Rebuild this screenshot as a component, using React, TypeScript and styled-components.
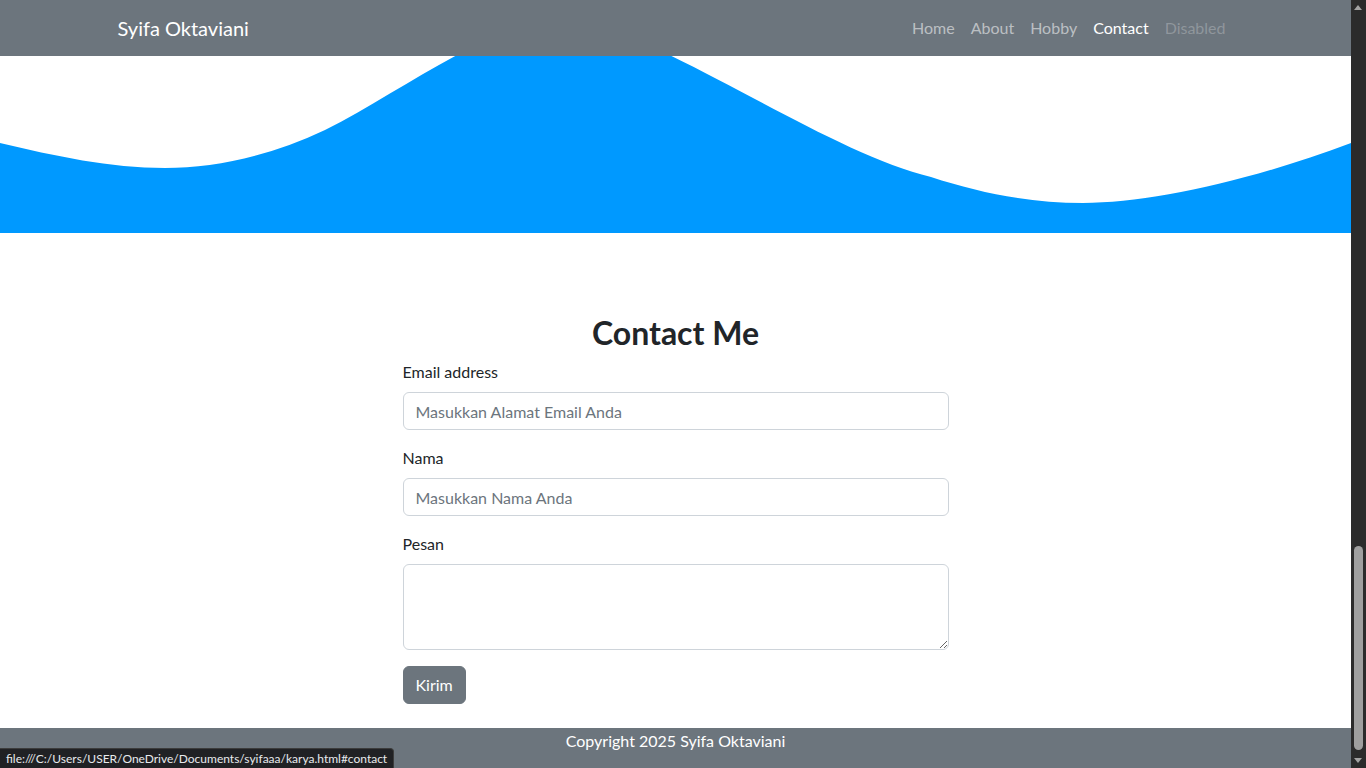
import React from 'react';
import styled, { createGlobalStyle } from 'styled-components';

const FONT = `Lato, "Open Sans", sans-serif`;

const Global = createGlobalStyle`
  html, body { margin: 0; padding: 0; overflow: hidden; background: #fff; }
  body { font-family: ${FONT}; font-size: 16px; line-height: 1.5; color: #212529; }
  *, *::before, *::after { box-sizing: border-box; }
`;

const Page = styled.div`
  margin-right: 15px;
  height: 768px;
  display: flex;
  flex-direction: column;
`;

const Navbar = styled.nav`
  height: 56px;
  background: #6c757d;
  display: flex;
  align-items: center;
`;

const Container = styled.div`
  width: 1140px;
  margin: 0 auto;
  padding: 0 12px;
  display: flex;
  align-items: center;
  justify-content: space-between;
`;

const Brand = styled.a`
  color: #fff;
  font-size: 20px;
  line-height: 30px;
  text-decoration: none;
`;

const NavList = styled.ul`
  display: flex;
  list-style: none;
  margin: 0;
  padding: 0;
`;

const NavLink = styled.a<{ $state?: 'active' | 'disabled' }>`
  display: block;
  padding: 8px;
  text-decoration: none;
  color: ${(p) =>
    p.$state === 'active' ? '#fff' : p.$state === 'disabled' ? 'rgba(255,255,255,.25)' : 'rgba(255,255,255,.55)'};
`;

const Wave = styled.svg`
  display: block;
  width: 100%;
  height: 177px;
`;

const Section = styled.section`
  flex: 1;
  padding-top: 81px;
  display: flex;
  flex-direction: column;
  align-items: center;
`;

const Title = styled.h2`
  margin: 0 0 8px;
  font-size: 32px;
  font-weight: 700;
  line-height: 1.2;
`;

const Form = styled.form`
  width: 546px;
  display: flex;
  flex-direction: column;
`;

const Field = styled.div`
  margin-bottom: 16px;
  display: flex;
  flex-direction: column;
`;

const Label = styled.label`
  margin-bottom: 8px;
`;

const Input = styled.input`
  height: 38px;
  padding: 6px 12px;
  font: inherit;
  color: #212529;
  border: 1px solid #ced4da;
  border-radius: 6px;
  &::placeholder { color: #6c757d; }
`;

const TextArea = styled.textarea`
  height: 86px;
  padding: 6px 12px;
  font: inherit;
  border: 1px solid #ced4da;
  border-radius: 6px;
  resize: vertical;
`;

const Button = styled.button`
  align-self: flex-start;
  height: 38px;
  padding: 6px 12px;
  font: inherit;
  color: #fff;
  background: #6c757d;
  border: 1px solid #6c757d;
  border-radius: 6px;
`;

const Footer = styled.footer`
  height: 40px;
  background: #6c757d;
  color: #fff;
  text-align: center;
  padding-top: 1px;
`;

const StatusBubble = styled.div`
  position: fixed;
  left: 0;
  bottom: 0;
  height: 20px;
  padding: 0 6px;
  background: #202124;
  border: 1px solid #3c3c3c;
  border-left: none;
  border-bottom: none;
  border-top-right-radius: 4px;
  color: #e8eaed;
  font-size: 12px;
  line-height: 19px;
`;

const Scrollbar = styled.div`
  position: fixed;
  top: 0;
  right: 0;
  width: 15px;
  height: 768px;
  background: #2b2b2b;
`;

const Thumb = styled.div`
  position: absolute;
  left: 3px;
  width: 9px;
  top: 546px;
  height: 204px;
  border-radius: 5px;
  background: #9f9f9f;
`;

const Arrow = styled.div<{ $down?: boolean }>`
  position: absolute;
  left: 3px;
  width: 0;
  height: 0;
  border-left: 4.5px solid transparent;
  border-right: 4.5px solid transparent;
  ${(p) =>
    p.$down
      ? `bottom: 5px; border-top: 5px solid #a3a3a3;`
      : `top: 5px; border-bottom: 5px solid #a3a3a3;`}
`;

export default function App() {
  return (
    <>
      <Global />
      <Page>
        <Navbar>
          <Container>
            <Brand href="#">Syifa Oktaviani</Brand>
            <NavList>
              <li><NavLink href="#home">Home</NavLink></li>
              <li><NavLink href="#about">About</NavLink></li>
              <li><NavLink href="#hobby">Hobby</NavLink></li>
              <li><NavLink href="#contact" $state="active">Contact</NavLink></li>
              <li><NavLink $state="disabled">Disabled</NavLink></li>
            </NavList>
          </Container>
        </Navbar>
        <Wave viewBox="0 0 1351 177" preserveAspectRatio="none">
          <path
            fill="#0099ff"
            d="M0,87 C55,100 110,112 165,112 C215,112 270,100 325,74 C405,34 490,-35 565,-35 C645,-35 820,95 931,121 C980,137 1030,147 1083,147 C1150,147 1250,125 1351,87 L1351,177 L0,177 Z"
          />
        </Wave>
        <Section id="contact">
          <Title>Contact Me</Title>
          <Form onSubmit={(e) => e.preventDefault()}>
            <Field>
              <Label htmlFor="email">Email address</Label>
              <Input id="email" type="email" placeholder="Masukkan Alamat Email Anda" />
            </Field>
            <Field>
              <Label htmlFor="nama">Nama</Label>
              <Input id="nama" type="text" placeholder="Masukkan Nama Anda" />
            </Field>
            <Field>
              <Label htmlFor="pesan">Pesan</Label>
              <TextArea id="pesan" rows={3} />
            </Field>
            <Button type="submit">Kirim</Button>
          </Form>
        </Section>
        <Footer>Copyright 2025 Syifa Oktaviani</Footer>
      </Page>
      <StatusBubble>file:///C:/Users/USER/OneDrive/Documents/syifaaa/karya.html#contact</StatusBubble>
      <Scrollbar>
        <Arrow />
        <Thumb />
        <Arrow $down />
      </Scrollbar>
    </>
  );
}
